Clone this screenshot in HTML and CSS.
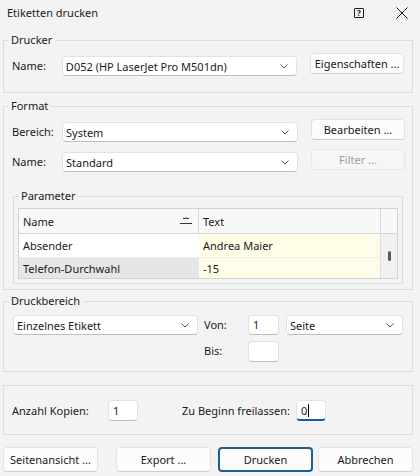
FILE: index.html
```html
<!DOCTYPE html>
<html lang="de">
<head>
<meta charset="utf-8">
<title>Etiketten drucken</title>
<link rel="stylesheet" href="styles.css">
</head>
<body>
<div class="titlebar">
  <span class="title">Etiketten drucken</span>
  <span class="help">?</span>
  <svg class="close" width="12" height="12" viewBox="0 0 12 12"><path d="M0.5 0.5 L11.5 11.5 M11.5 0.5 L0.5 11.5" stroke="#1a1a1a" stroke-width="1" fill="none"/></svg>
</div>

<fieldset class="group g-drucker">
  <legend>Drucker</legend>
  <div class="gbody pad-drucker">
    <div class="frow">
      <span class="lbl">Name:</span>
      <div class="select w-main"><span class="val">D052 (HP LaserJet Pro M501dn)</span><svg class="chev" width="8" height="5" viewBox="0 0 8 5"><polyline points="0.5,0.5 4,4 7.5,0.5" fill="none" stroke="#555" stroke-width="1"/></svg></div>
      <button class="btn side">Eigenschaften ...</button>
    </div>
  </div>
</fieldset>

<fieldset class="group g-format">
  <legend>Format</legend>
  <div class="gbody pad-format">
    <div class="frow">
      <span class="lbl">Bereich:</span>
      <div class="select w-main"><span class="val">System</span><svg class="chev" width="8" height="5" viewBox="0 0 8 5"><polyline points="0.5,0.5 4,4 7.5,0.5" fill="none" stroke="#555" stroke-width="1"/></svg></div>
      <button class="btn side">Bearbeiten ...</button>
    </div>
    <div class="frow second">
      <span class="lbl">Name:</span>
      <div class="select w-main"><span class="val">Standard</span><svg class="chev" width="8" height="5" viewBox="0 0 8 5"><polyline points="0.5,0.5 4,4 7.5,0.5" fill="none" stroke="#555" stroke-width="1"/></svg></div>
      <button class="btn side disabled">Filter ...</button>
    </div>

    <fieldset class="group g-param">
      <legend>Parameter</legend>
      <div class="gbody pad-param">
        <div class="grid-table">
          <div class="th th-name"><span>Name</span><svg class="sort" width="12" height="8" viewBox="0 0 12 8"><path d="M3 1.5 L5.5 1.5 L6 0.5 L6.5 1.5 L9 1.5" fill="none" stroke="#333" stroke-width="1"/><path d="M0 6.5 L12 6.5" stroke="#333" stroke-width="1"/></svg></div>
          <div class="th th-text">Text</div>
          <div class="th th-scroll"></div>
          <div class="td name r1">Absender</div>
          <div class="td text r1">Andrea Maier</div>
          <div class="td scroll"><span class="thumb"></span></div>
          <div class="td name r2 sel">Telefon-Durchwahl</div>
          <div class="td text r2">-15</div>
        </div>
      </div>
    </fieldset>
  </div>
</fieldset>

<fieldset class="group g-range">
  <legend>Druckbereich</legend>
  <div class="gbody pad-range">
    <div class="range-grid">
      <div class="select c-sel"><span class="val">Einzelnes Etikett</span><svg class="chev" width="8" height="5" viewBox="0 0 8 5"><polyline points="0.5,0.5 4,4 7.5,0.5" fill="none" stroke="#555" stroke-width="1"/></svg></div>
      <span class="rlbl c-lbl">Von:</span>
      <div class="input c-in">1</div>
      <div class="select c-unit"><span class="val">Seite</span><svg class="chev" width="8" height="5" viewBox="0 0 8 5"><polyline points="0.5,0.5 4,4 7.5,0.5" fill="none" stroke="#555" stroke-width="1"/></svg></div>
      <span class="rlbl c-lbl row2">Bis:</span>
      <div class="input c-in row2 tall"></div>
    </div>
  </div>
</fieldset>

<div class="copies">
  <span class="clbl l1">Anzahl Kopien:</span>
  <div class="input small">1</div>
  <span class="clbl l2">Zu Beginn freilassen:</span>
  <div class="input small focus">0<span class="caret"></span></div>
</div>

<div class="actions">
  <button class="btn act">Seitenansicht ...</button>
  <button class="btn act export">Export ...</button>
  <button class="btn act primary">Drucken</button>
  <button class="btn act cancel">Abbrechen</button>
</div>
</body>
</html>
```

FILE: styles.css
```css
* { box-sizing: border-box; }

body {
  margin: 0;
  width: 420px;
  height: 476px;
  overflow: hidden;
  background: #f3f3f3;
  color: #1a1a1a;
  font-family: "Noto Sans", "Open Sans", sans-serif;
  font-size: 11px;
}

.titlebar {
  height: 25px;
  display: flex;
  align-items: center;
  padding-left: 7px;
}

.title {
  flex: 1;
  font-size: 11px;
}

.help {
  width: 10px;
  height: 10px;
  border: 1px solid #1a1a1a;
  border-radius: 1px;
  font-size: 8px;
  font-weight: bold;
  line-height: 8px;
  text-align: center;
  margin-right: 32px;
}

.close {
  margin-right: 12px;
}

.group {
  margin: 0 7px 0 3px;
  padding: 0;
  border: 1px solid #dcdcdc;
  min-width: 0;
}

.group legend {
  margin-left: 4px;
  padding: 0 3px;
  line-height: 16px;
  font-size: 11px;
}

.g-drucker { margin-top: 7px; }
.g-format { margin-top: 5px; }
.g-range { margin-top: 3px; }

.pad-drucker { padding: 5px 8px 16px 8px; }
.pad-format { padding: 5px 0 5px 8px; }
.pad-param { padding: 4px 0 4px 4px; }
.pad-range { padding: 6px 0 10px 9px; }

.frow {
  display: flex;
  align-items: flex-start;
}

.frow.second { margin-top: 7px; }

.lbl {
  width: 50px;
  height: 20px;
  line-height: 20px;
  margin-top: 3px;
}

.select {
  display: flex;
  align-items: center;
  height: 20px;
  background: #fff;
  border: 1px solid #e2e2e2;
  border-bottom-color: #bdbdbd;
  border-radius: 4px;
  padding-left: 3px;
}

.select .val {
  flex: 1;
  white-space: nowrap;
  overflow: hidden;
}

.chev {
  margin-right: 8px;
}

.w-main {
  width: 236px;
  margin-top: 3px;
}

.btn {
  font-family: inherit;
  font-size: 11px;
  color: #1a1a1a;
  background: #fcfcfc;
  border: 1px solid #e3e3e3;
  border-bottom-color: #cdcdcd;
  border-radius: 4px;
  padding: 0;
  margin: 0;
}

.btn.side {
  width: 94px;
  height: 21px;
  margin-left: 13px;
}

.btn.disabled {
  background: #f6f6f6;
  border-color: #e6e6e6;
  color: #9e9e9e;
}

.g-param {
  margin: 16px 0 0 1px;
  width: 390px;
}

.grid-table {
  width: 380px;
  display: grid;
  grid-template-columns: 180px 182px 16px;
  grid-template-rows: 25px 24px 20px;
  border: 1px solid #d3d3d3;
}

.th {
  background: #f8f8f8;
  border-bottom: 1px solid #d6d6d6;
  display: flex;
  align-items: center;
  padding-left: 4px;
}

.th-name {
  border-right: 1px solid #d6d6d6;
  justify-content: space-between;
}

.sort { margin-right: 6px; }

.th-text { border-right: 1px solid #d6d6d6; }

.th-scroll { padding: 0; }

.td {
  display: flex;
  align-items: center;
  padding-left: 4px;
  white-space: nowrap;
}

.td.name { background: #fff; }
.td.name.sel { background: #e6e6e6; }

.td.text {
  background: #fffde7;
  border-right: 1px solid #dedede;
}

.td.r1 { border-bottom: 1px solid #ededed; }

.td.scroll {
  grid-column: 3;
  grid-row: 2 / span 2;
  background: #f1f1f1;
  justify-content: center;
  padding-left: 0;
}

.thumb {
  width: 3px;
  height: 10px;
  border-radius: 1.5px;
  background: #5a5a5a;
}

.range-grid {
  display: grid;
  grid-template-columns: 185px 6px 44px 31px 7px 117px;
  grid-template-rows: 20px 20px;
  row-gap: 6px;
}

.c-sel { grid-column: 1; grid-row: 1; }
.c-lbl { grid-column: 3; grid-row: 1; }
.c-in { grid-column: 4; grid-row: 1; }
.c-unit { grid-column: 6; grid-row: 1; }
.row2 { grid-row: 2; }

.rlbl {
  line-height: 20px;
}

.input {
  height: 20px;
  background: #fff;
  border: 1px solid #e2e2e2;
  border-bottom-color: #bdbdbd;
  border-radius: 4px;
  padding-left: 4px;
  line-height: 18px;
}

.input.tall { height: 21px; }

.copies {
  margin: 13px 7px 0 3px;
  border: 1px solid #dcdcdc;
  padding: 14px 0 13px 8px;
  display: flex;
  align-items: center;
}

.clbl.l1 { width: 96px; }
.clbl.l2 { width: 114px; margin-left: 44px; }

.input.small {
  width: 30px;
  height: 21px;
  line-height: 19px;
}

.input.focus {
  display: flex;
  align-items: center;
  border-bottom: 2px solid #0f5fa8;
}

.caret {
  width: 1px;
  height: 13px;
  background: #000;
  margin-left: 1px;
}

.actions {
  display: flex;
  margin: 12px 0 0 3px;
}

.btn.act {
  width: 95px;
  height: 25px;
}

.btn.export { margin-left: 18px; }
.btn.primary {
  margin-left: 7px;
  border: 2px solid #1f5e90;
}
.btn.cancel { margin-left: 5px; }
```
